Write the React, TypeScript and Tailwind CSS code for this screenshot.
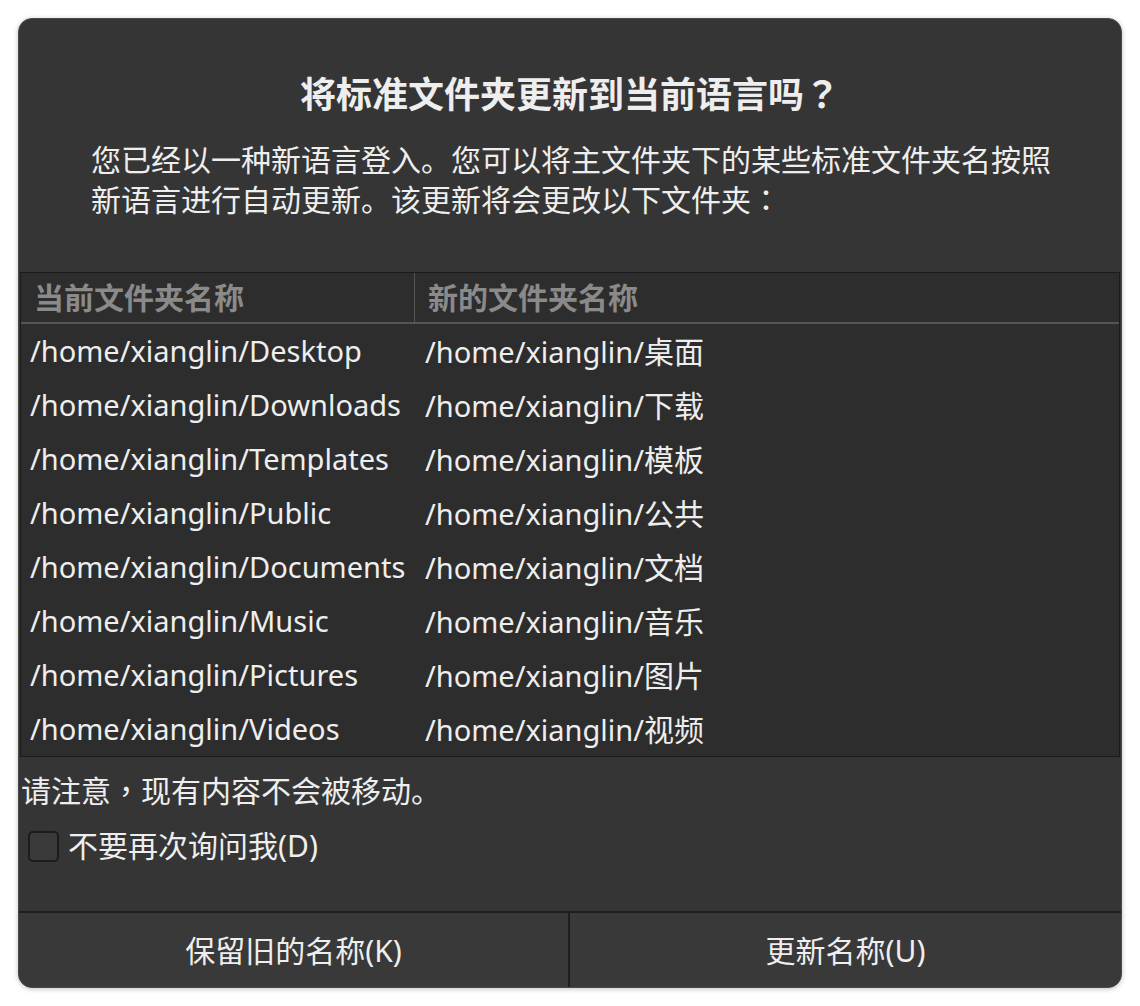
import React from "react";

const rows = [
  ["Desktop", "桌面"],
  ["Downloads", "下载"],
  ["Templates", "模板"],
  ["Public", "公共"],
  ["Documents", "文档"],
  ["Music", "音乐"],
  ["Pictures", "图片"],
  ["Videos", "视频"],
];

const font = { fontFamily: '"Noto Sans", "Noto Sans CJK SC", sans-serif' };
const tcFont = { fontFamily: '"Noto Sans CJK TC", sans-serif' };

// full-width punctuation sits centred in the cell in the reference
const P = ({ c }: { c: string }) => (
  <span className="leading-[0]" style={tcFont}>
    {c}
  </span>
);

export default function App() {
  return (
    <div className="min-h-[1006px] bg-white pl-[18px] pt-[18px]" style={font}>
      <div className="flex h-[970px] w-[1104px] flex-col overflow-hidden rounded-[14px] border border-[#4a4a4a] bg-[#353535] text-[#eeeeee] shadow-[0_1px_5px_rgba(0,0,0,0.25)]">
        <h1 className="mt-[51px] text-center text-[36px] font-bold leading-[50px]">
          将标准文件夹更新到当前语言吗<P c="？" />
        </h1>
        <p className="mt-[20px] pl-[72px] pr-[60px] text-[30px] leading-[40px]">
          您已经以一种新语言登入。您可以将主文件夹下的某些标准文件夹名按照
          <br />
          新语言进行自动更新。该更新将会更改以下文件夹<P c="：" />
        </p>

        <div className="mx-px mt-[52px] border border-[#1b1b1b] bg-[#2d2d2d]">
          <div className="flex h-[51px] border-b-2 border-[#555555] text-[30px] font-bold text-[#8a8a8a]">
            <div className="flex w-[394px] items-center border-r border-[#555555] pl-[13px]">
              当前文件夹名称
            </div>
            <div className="flex items-center pl-[13px]">新的文件夹名称</div>
          </div>
          {rows.map(([en, zh]) => (
            <div key={en} className="flex h-[54px] items-center text-[29px]">
              <div className="w-[395px] pl-[9px]">/home/xianglin/{en}</div>
              <div className="pl-[9px]">
                /home/xianglin/<span className="text-[30px]">{zh}</span>
              </div>
            </div>
          ))}
        </div>

        <p className="mt-[14px] pl-[2px] text-[30px] leading-[40px]">
          请注意<P c="，" />现有内容不会被移动。
        </p>
        <label className="mt-[15px] flex items-center pl-[9px] text-[30px] leading-[40px]">
          <span className="h-[31px] w-[31px] rounded-[5px] border-2 border-[#1c1c1c] bg-[#3a3a3a]" />
          <span className="ml-[9px]">不要再次询问我(D)</span>
        </label>

        <div className="mt-auto flex h-[76px] border-t-2 border-[#1e1e1e] bg-[#393939] text-[30px]">
          <button className="flex w-[551px] items-center justify-center border-r-2 border-[#1e1e1e] text-[#eeeeee]">
            保留旧的名称(K)
          </button>
          <button className="flex flex-1 items-center justify-center text-[#eeeeee]">
            更新名称(U)
          </button>
        </div>
      </div>
    </div>
  );
}
